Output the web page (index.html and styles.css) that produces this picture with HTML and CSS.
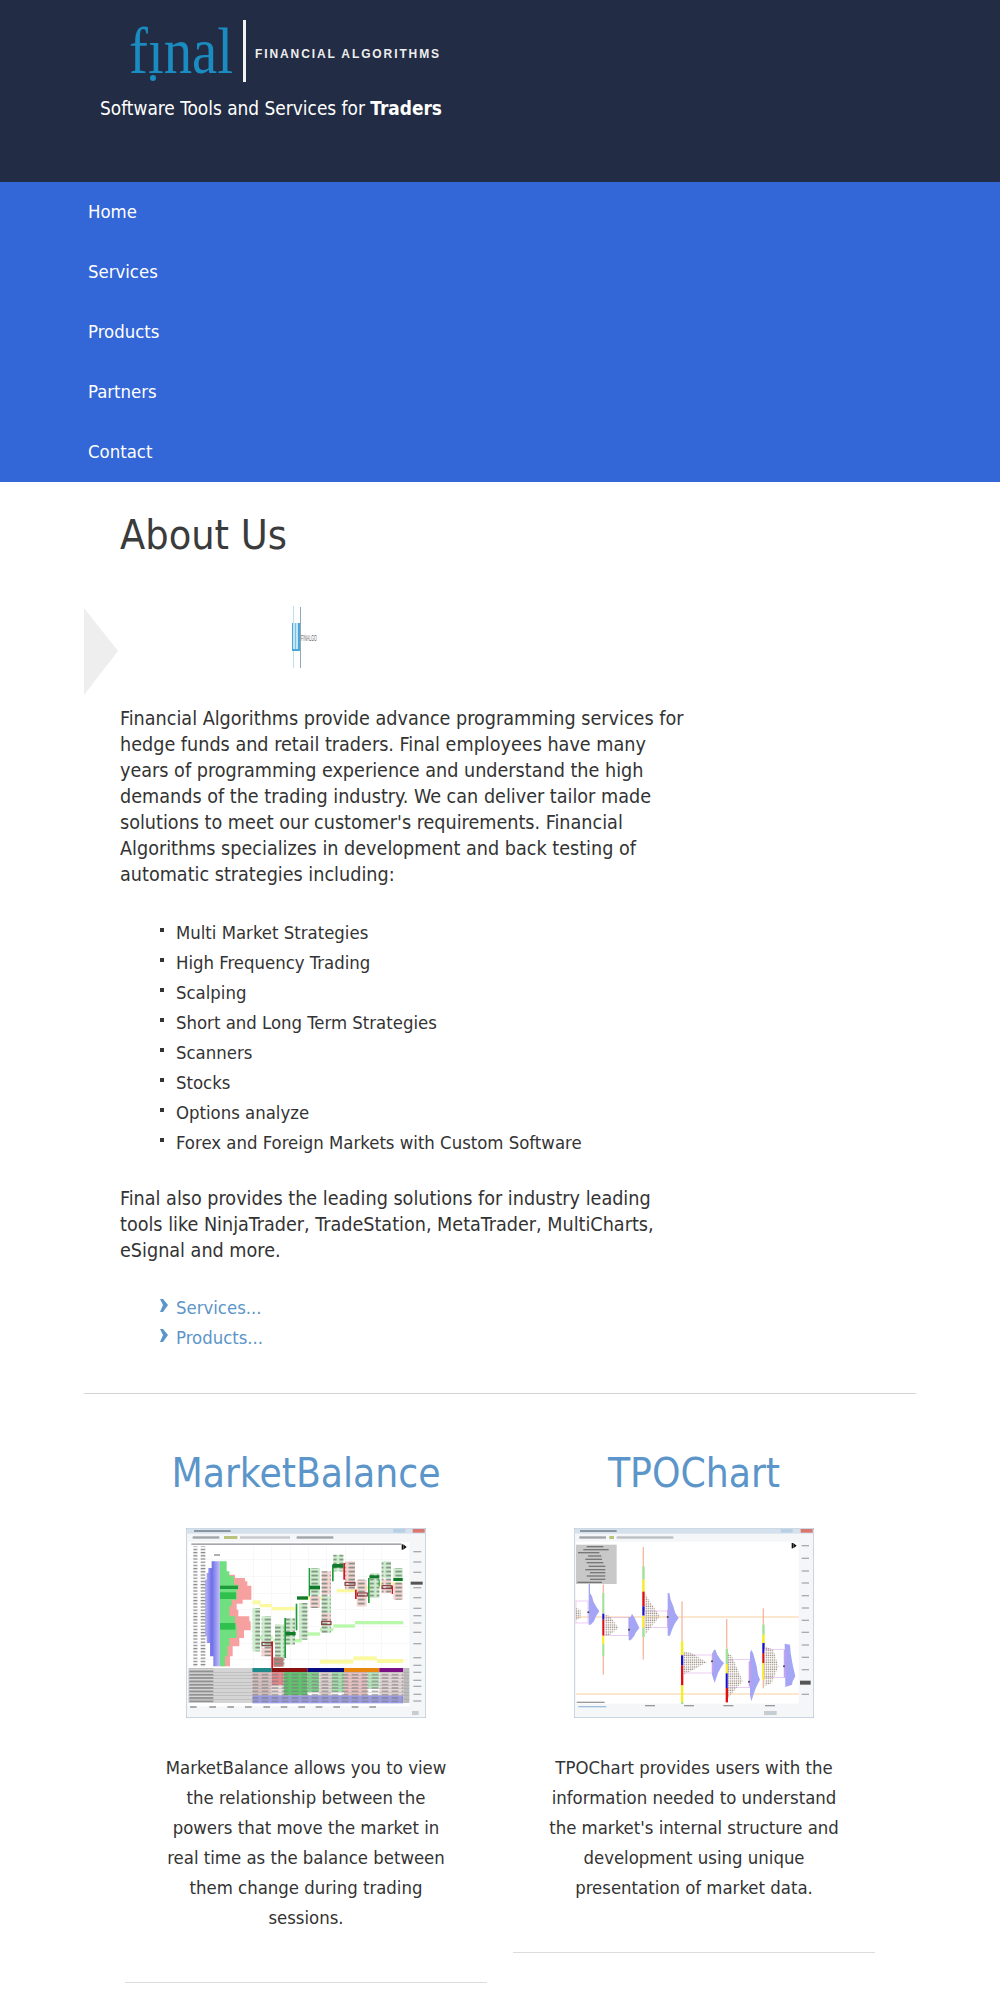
FILE: index.html
```html
<!DOCTYPE html>
<html lang="en">
<head>
  <meta charset="UTF-8">
  <title>Financial Algorithms</title>
  <link rel="stylesheet" href="styles.css">
</head>
<body>

<header class="top">
  <div class="logo">
    <span class="logo-word"><span class="logo-letters">fınal</span><span class="logo-dot"></span></span>
    <span class="logo-name">FINANCIAL ALGORITHMS</span>
  </div>
  <p class="tagline">Software Tools and Services for <strong>Traders</strong></p>
</header>

<nav class="menu">
  <a href="#">Home</a>
  <a href="#">Services</a>
  <a href="#">Products</a>
  <a href="#">Partners</a>
  <a href="#">Contact</a>
</nav>

<main class="page">
  <h1>About Us</h1>

  <div class="banner">
    <svg class="banner-arrow" width="34" height="87" viewBox="0 0 34 87"><polygon points="0,0 34,43 0,87" fill="#eeeeee"/></svg>
    <svg class="banner-logo" width="26" height="62" viewBox="0 0 26 62">
      <rect x="1" y="0" width="1" height="62" fill="#bcdff0"/>
      <rect x="8" y="1" width="1" height="61" fill="#8fa9b5"/>
      <rect x="0" y="17" width="8" height="28" fill="#c4e5f4"/>
      <rect x="0" y="17" width="1" height="28" fill="#4aa6d6"/>
      <rect x="3" y="17" width="1" height="28" fill="#7cc0e2"/>
      <rect x="6" y="17" width="2" height="28" fill="#4aa6d6"/>
      <rect x="0" y="43" width="8" height="2" fill="#4aa6d6"/>
      <text transform="translate(9 35) scale(0.4 1)" font-size="9" font-family="Liberation Sans" fill="#666">FINALGO</text>
    </svg>
  </div>

  <div class="about">
    <p>Financial Algorithms provide advance programming services for hedge funds and retail traders. Final employees have many years of programming experience and understand the high demands of the trading industry. We can deliver tailor made solutions to meet our customer's requirements. Financial Algorithms specializes in development and back testing of automatic strategies including:</p>

    <ul class="squares">
      <li>Multi Market Strategies</li>
      <li>High Frequency Trading</li>
      <li>Scalping</li>
      <li>Short and Long Term Strategies</li>
      <li>Scanners</li>
      <li>Stocks</li>
      <li>Options analyze</li>
      <li>Forex and Foreign Markets with Custom Software</li>
    </ul>

    <p>Final also provides the leading solutions for industry leading tools like NinjaTrader, TradeStation, MetaTrader, MultiCharts, eSignal and more.</p>

    <ul class="more">
      <li><svg width="8" height="14" viewBox="0 0 8 14"><path d="M0 0 L3 0 L8 6 L3 13 L0 13 L3 6 Z" fill="#5b95c9"/></svg><a href="#">Services...</a></li>
      <li><svg width="8" height="14" viewBox="0 0 8 14"><path d="M0 0 L3 0 L8 6 L3 13 L0 13 L3 6 Z" fill="#5b95c9"/></svg><a href="#">Products...</a></li>
    </ul>
  </div>

  <hr class="divider">

  <div class="products">
    <section class="product">
      <h2><a href="#">MarketBalance</a></h2>
      <svg class="shot" width="240" height="190" viewBox="48 55 720 570">
        <defs>
          <linearGradient id="blueProfile" x1="0" x2="1" y1="0" y2="0">
            <stop offset="0" stop-color="#b9b9f6"/>
            <stop offset="0.45" stop-color="#6e6eea"/>
            <stop offset="1" stop-color="#c2c2f4"/>
          </linearGradient>
          <pattern id="labelRows" width="46" height="9.6" patternUnits="userSpaceOnUse">
            <rect x="0" y="2" width="36" height="4" fill="#8a8a8a"/>
          </pattern>
          <pattern id="cellRows" width="30" height="10" patternUnits="userSpaceOnUse">
            <rect x="5" y="3" width="20" height="4" fill="#777"/>
          </pattern>
          <pattern id="numRows" width="28" height="12" patternUnits="userSpaceOnUse">
            <rect x="4" y="3" width="20" height="5" fill="#7c8c7c"/>
          </pattern>
          <pattern id="tableRows" width="60" height="10" patternUnits="userSpaceOnUse">
            <rect x="0" y="3" width="60" height="4" fill="#808080"/>
          </pattern>
          <pattern id="tpoText" width="6" height="7" patternUnits="userSpaceOnUse">
            <rect x="0" y="1" width="4" height="4" fill="#a5988c"/>
          </pattern>
        </defs>
        <rect x="48" y="55" width="720" height="570" fill="#f4f6f8" stroke="#9fb4c8" stroke-width="3"/>
        <rect x="50" y="57" width="716" height="15" fill="#d5e2ee"/>
        <rect x="670" y="58" width="36" height="11" fill="#b9cfe4"/>
        <rect x="728" y="58" width="36" height="11" fill="#d9776f"/>
        <rect x="72" y="61" width="110" height="6" fill="#8a96a2"/>
        <rect x="68" y="80" width="80" height="7" fill="#a0a4a8"/>
        <rect x="162" y="79" width="40" height="9" fill="#b8c27c"/>
        <rect x="210" y="80" width="150" height="7" fill="#c5c8cc"/>
        <rect x="380" y="80" width="110" height="7" fill="#a0a4a8"/>
        <rect x="55" y="97" width="663" height="493" fill="#ffffff"/>
        <rect x="64" y="101" width="630" height="5" fill="#a5a8ac"/>
        <rect x="695" y="104" width="4" height="16" fill="#111"/>
        <polygon points="700,104 710,112 700,120" fill="#111"/>

        <g fill="#e9e9e9">
          <rect x="250" y="110" width="1" height="365"/><rect x="305" y="110" width="1" height="365"/><rect x="360" y="110" width="1" height="365"/><rect x="415" y="110" width="1" height="365"/><rect x="470" y="110" width="1" height="365"/><rect x="525" y="110" width="1" height="365"/><rect x="580" y="110" width="1" height="365"/><rect x="635" y="110" width="1" height="365"/>
          <rect x="60" y="150" width="655" height="1"/><rect x="60" y="200" width="655" height="1"/><rect x="60" y="250" width="655" height="1"/><rect x="60" y="300" width="655" height="1"/><rect x="60" y="350" width="655" height="1"/><rect x="60" y="400" width="655" height="1"/><rect x="60" y="450" width="655" height="1"/>
        </g>

        <polygon points="125,155 150,155 150,470 130,470 130,440 120,440 120,400 110,400 110,380 105,380 105,210 110,210 110,190 115,190 115,175 125,175" fill="url(#blueProfile)"/>
        <polygon points="150,195 195,195 195,205 225,205 225,215 232,215 232,228 244,228 244,270 218,270 218,282 200,282 200,300 205,300 205,320 238,320 238,335 242,335 242,362 222,362 222,385 208,385 208,410 188,410 188,440 180,440 180,470 150,470" fill="#f6a0a0"/>
        <polygon points="150,155 170,155 170,185 178,185 178,200 192,200 192,225 205,225 205,240 200,240 200,270 185,270 185,290 178,290 178,320 195,320 195,345 200,345 200,385 178,385 178,410 172,410 172,440 165,440 165,470 150,470" fill="#6fdf80"/>
        <rect x="150" y="228" width="54" height="10" fill="#1f9c3a"/>
        <rect x="150" y="248" width="48" height="20" fill="#2fc04e"/>
        <rect x="150" y="340" width="46" height="20" fill="#2fc04e"/>
        <rect x="70" y="110" width="36" height="362" fill="url(#labelRows)"/>
        <rect x="132" y="134" width="18" height="4" fill="#888"/>

        <g fill="#fbf9a0">
          <rect x="248" y="272" width="24" height="12"/><rect x="270" y="283" width="36" height="10"/><rect x="305" y="292" width="70" height="10"/><rect x="395" y="260" width="60" height="10"/><rect x="500" y="238" width="60" height="10"/><rect x="560" y="228" width="70" height="10"/><rect x="625" y="218" width="70" height="10"/>
          <rect x="450" y="450" width="100" height="12"/><rect x="550" y="440" width="70" height="12"/><rect x="620" y="448" width="80" height="12"/>
        </g>
        <g fill="#b9f7ab">
          <rect x="248" y="378" width="60" height="10"/><rect x="310" y="388" width="85" height="10"/><rect x="395" y="368" width="55" height="10"/><rect x="450" y="355" width="40" height="10"/><rect x="490" y="344" width="65" height="10"/><rect x="555" y="334" width="145" height="10"/>
        </g>

        <g fill="#cfeecf">
          <rect x="248" y="295" width="22" height="130"/><rect x="275" y="320" width="28" height="90"/><rect x="315" y="345" width="28" height="125"/><rect x="345" y="325" width="30" height="80"/><rect x="388" y="280" width="24" height="110"/><rect x="420" y="175" width="30" height="80"/><rect x="455" y="260" width="28" height="110"/><rect x="490" y="135" width="30" height="50"/><rect x="600" y="190" width="28" height="75"/><rect x="635" y="155" width="28" height="50"/><rect x="670" y="175" width="28" height="40"/>
        </g>
        <g fill="#f8d5d5">
          <rect x="420" y="260" width="30" height="35"/><rect x="455" y="185" width="28" height="70"/><rect x="525" y="155" width="30" height="85"/><rect x="560" y="210" width="30" height="80"/><rect x="635" y="210" width="28" height="40"/><rect x="670" y="220" width="28" height="50"/><rect x="275" y="415" width="28" height="25"/><rect x="455" y="310" width="28" height="30"/>
        </g>
        <g fill="url(#numRows)">
          <rect x="248" y="295" width="22" height="130"/><rect x="275" y="320" width="28" height="120"/><rect x="315" y="345" width="28" height="125"/><rect x="345" y="325" width="30" height="80"/><rect x="388" y="280" width="24" height="110"/><rect x="420" y="175" width="30" height="120"/><rect x="455" y="185" width="28" height="185"/><rect x="490" y="135" width="30" height="50"/><rect x="525" y="155" width="30" height="85"/><rect x="560" y="210" width="30" height="80"/><rect x="600" y="190" width="28" height="75"/><rect x="635" y="155" width="28" height="95"/><rect x="670" y="175" width="28" height="95"/>
        </g>
        <g fill="#1f9c3a">
          <rect x="343" y="325" width="5" height="120"/><rect x="377" y="282" width="5" height="80"/><rect x="416" y="175" width="4" height="85"/><rect x="486" y="165" width="5" height="50"/><rect x="594" y="205" width="5" height="75"/><rect x="626" y="210" width="3" height="20"/>
        </g>
        <g fill="#d8141c">
          <rect x="304" y="395" width="5" height="80"/><rect x="520" y="160" width="5" height="50"/><rect x="555" y="240" width="5" height="28"/><rect x="665" y="228" width="4" height="25"/>
        </g>
        <g fill="#0f7a2b">
          <rect x="381" y="260" width="33" height="10"/><rect x="347" y="367" width="30" height="10"/><rect x="418" y="228" width="32" height="11"/><rect x="488" y="163" width="32" height="11"/><rect x="598" y="197" width="30" height="9"/><rect x="670" y="205" width="28" height="9"/>
        </g>
        <g fill="none" stroke="#7b2a32" stroke-width="3">
          <rect x="276" y="398" width="28" height="10"/><rect x="455" y="335" width="28" height="10"/><rect x="525" y="218" width="30" height="9"/><rect x="562" y="250" width="30" height="9"/><rect x="636" y="228" width="28" height="9"/>
        </g>
        <rect x="310" y="443" width="30" height="28" fill="#c27a7a"/>
        <rect x="310" y="443" width="30" height="28" fill="url(#numRows)"/>

        <g fill="#a8acb0">
          <rect x="730" y="124" width="24" height="4"/><rect x="730" y="155" width="24" height="4"/><rect x="730" y="186" width="24" height="4"/><rect x="730" y="232" width="24" height="4"/><rect x="730" y="262" width="24" height="4"/><rect x="730" y="294" width="24" height="4"/><rect x="730" y="316" width="24" height="4"/><rect x="730" y="338" width="24" height="4"/><rect x="730" y="366" width="24" height="4"/><rect x="730" y="400" width="24" height="4"/><rect x="730" y="442" width="24" height="4"/><rect x="730" y="465" width="24" height="4"/><rect x="730" y="486" width="24" height="4"/><rect x="730" y="510" width="24" height="4"/><rect x="730" y="528" width="24" height="4"/><rect x="730" y="552" width="24" height="4"/><rect x="730" y="572" width="24" height="4"/>
        </g>
        <rect x="722" y="216" width="36" height="9" fill="#555"/>

        <rect x="55" y="475" width="192" height="105" fill="#d4d4d4"/>
        <rect x="58" y="477" width="72" height="103" fill="url(#tableRows)"/>
        <rect x="247" y="475" width="58" height="12" fill="#1f8a8a"/>
        <rect x="305" y="475" width="107" height="12" fill="#8a1010"/>
        <rect x="412" y="475" width="110" height="12" fill="#0a0a80"/>
        <rect x="522" y="475" width="106" height="12" fill="#e8860f"/>
        <rect x="628" y="475" width="72" height="12" fill="#7a0f86"/>
        <rect x="247" y="487" width="58" height="70" fill="#d6bfbf"/>
        <rect x="305" y="487" width="36" height="40" fill="#e8868a"/>
        <rect x="305" y="527" width="36" height="30" fill="#efe0e0"/>
        <rect x="341" y="487" width="71" height="70" fill="#5cc46a"/>
        <rect x="412" y="487" width="36" height="60" fill="#7ed18a"/>
        <rect x="448" y="487" width="36" height="70" fill="#e0d0d0"/>
        <rect x="484" y="487" width="38" height="60" fill="#a5e0ad"/>
        <rect x="522" y="487" width="70" height="70" fill="#e8c2c2"/>
        <rect x="592" y="487" width="36" height="50" fill="#b8e6be"/>
        <rect x="628" y="487" width="72" height="70" fill="#e4d6d6"/>
        <rect x="247" y="557" width="453" height="24" fill="#9c9ce4"/>
        <rect x="247" y="487" width="453" height="94" fill="url(#cellRows)" opacity="0.7"/>
        <rect x="700" y="475" width="18" height="105" fill="#bbb"/>
        <g fill="#999">
          <rect x="55" y="487" width="663" height="1"/><rect x="55" y="497" width="663" height="1"/><rect x="55" y="507" width="663" height="1"/><rect x="55" y="517" width="663" height="1"/><rect x="55" y="527" width="663" height="1"/><rect x="55" y="537" width="663" height="1"/><rect x="55" y="547" width="663" height="1"/><rect x="55" y="557" width="663" height="1"/><rect x="55" y="569" width="663" height="1"/>
        </g>
        <g fill="#888">
          <rect x="60" y="590" width="20" height="4"/><rect x="118" y="590" width="20" height="4"/><rect x="172" y="590" width="20" height="4"/><rect x="225" y="590" width="20" height="4"/><rect x="280" y="590" width="20" height="4"/><rect x="332" y="590" width="20" height="4"/><rect x="385" y="590" width="20" height="4"/><rect x="437" y="590" width="20" height="4"/><rect x="490" y="590" width="20" height="4"/><rect x="545" y="590" width="20" height="4"/><rect x="598" y="590" width="20" height="4"/>
        </g>
        <rect x="726" y="604" width="20" height="12" fill="#c5ccd2"/>
      </svg>
      <p>MarketBalance allows you to view the relationship between the powers that move the market in real time as the balance between them change during trading sessions.</p>
      <hr class="product-rule">
    </section>

    <section class="product">
      <h2><a href="#">TPOChart</a></h2>
      <svg class="shot" width="240" height="190" viewBox="42 55 720 570">
        <rect x="42" y="55" width="720" height="570" fill="#f4f6f8" stroke="#9fb4c8" stroke-width="3"/>
        <rect x="44" y="57" width="716" height="15" fill="#d5e2ee"/>
        <rect x="662" y="58" width="36" height="11" fill="#b9cfe4"/>
        <rect x="722" y="58" width="36" height="11" fill="#d9776f"/>
        <rect x="60" y="61" width="110" height="6" fill="#8a96a2"/>
        <rect x="58" y="80" width="80" height="7" fill="#a0a4a8"/>
        <rect x="148" y="79" width="14" height="9" fill="#b8c27c"/>
        <rect x="170" y="80" width="170" height="7" fill="#bcc0c4"/>
        <rect x="48" y="96" width="668" height="486" fill="#ffffff"/>
        <rect x="48" y="105" width="122" height="118" fill="#c8c8c8"/>
        <g fill="#777">
          <rect x="80" y="109" width="50" height="4"/><rect x="70" y="118" width="76" height="4"/><rect x="54" y="127" width="64" height="4"/><rect x="84" y="137" width="40" height="4"/><rect x="76" y="147" width="50" height="4"/><rect x="80" y="157" width="50" height="4"/><rect x="86" y="168" width="50" height="4"/><rect x="76" y="178" width="60" height="4"/><rect x="90" y="187" width="46" height="4"/><rect x="80" y="197" width="56" height="4"/><rect x="90" y="207" width="46" height="4"/><rect x="52" y="216" width="74" height="4"/>
        </g>
        <rect x="695" y="100" width="4" height="16" fill="#111"/>
        <polygon points="700,100 710,108 700,116" fill="#111"/>

        <rect x="48" y="321" width="668" height="2" fill="#f2b76a"/>
        <rect x="48" y="552" width="668" height="2" fill="#f2b76a"/>

        <rect x="128" y="225" width="4" height="270" fill="#f6b8a0"/>
        <rect x="127" y="250" width="6" height="60" fill="#9fe39a"/>
        <rect x="127" y="312" width="6" height="18" fill="#1414c8"/>
        <rect x="127" y="330" width="6" height="48" fill="#e01010"/>
        <rect x="127" y="378" width="6" height="26" fill="#f5ef20"/>
        <rect x="127" y="404" width="6" height="36" fill="#9fe39a"/>

        <rect x="248" y="112" width="4" height="338" fill="#f6b8a0"/>
        <rect x="247" y="170" width="7" height="40" fill="#9fe39a"/>
        <rect x="247" y="210" width="7" height="36" fill="#f5ef20"/>
        <rect x="247" y="246" width="7" height="44" fill="#e01010"/>
        <rect x="247" y="290" width="7" height="28" fill="#1414c8"/>
        <rect x="247" y="318" width="7" height="36" fill="#f5ef20"/>
        <rect x="247" y="354" width="7" height="28" fill="#9fe39a"/>

        <rect x="364" y="275" width="4" height="305" fill="#f6b8a0"/>
        <rect x="363" y="395" width="7" height="42" fill="#f5ef20"/>
        <rect x="363" y="437" width="7" height="30" fill="#1414c8"/>
        <rect x="363" y="467" width="7" height="60" fill="#e01010"/>
        <rect x="363" y="527" width="7" height="50" fill="#f5ef20"/>
        <rect x="363" y="577" width="7" height="6" fill="#9fe39a"/>

        <rect x="498" y="328" width="4" height="250" fill="#f6b8a0"/>
        <rect x="497" y="418" width="7" height="45" fill="#9fe39a"/>
        <rect x="497" y="463" width="7" height="28" fill="#f5ef20"/>
        <rect x="497" y="491" width="7" height="44" fill="#1414c8"/>
        <rect x="497" y="535" width="7" height="43" fill="#e01010"/>

        <rect x="608" y="296" width="4" height="240" fill="#f6b8a0"/>
        <rect x="607" y="345" width="7" height="30" fill="#9fe39a"/>
        <rect x="607" y="375" width="7" height="25" fill="#f5ef20"/>
        <rect x="607" y="400" width="7" height="30" fill="#1414c8"/>
        <rect x="607" y="430" width="7" height="30" fill="#e01010"/>
        <rect x="607" y="460" width="7" height="50" fill="#f5ef20"/>

        <g fill="none" stroke="#e3b5ee" stroke-width="2">
          <rect x="48" y="274" width="36" height="66"/><rect x="134" y="324" width="72" height="54"/><rect x="255" y="304" width="68" height="50"/><rect x="370" y="436" width="86" height="54"/><rect x="504" y="450" width="66" height="84"/><rect x="614" y="420" width="58" height="84"/>
        </g>
        <g fill="#a5a5f5">
          <polygon points="86,222 90,222 90,250 96,260 100,275 108,290 118,305 108,320 102,335 92,345 86,345"/>
          <polygon points="206,322 212,322 216,312 224,325 238,355 228,368 222,380 212,392 206,392"/>
          <polygon points="323,250 328,250 332,270 340,290 346,310 356,325 344,342 336,360 330,378 323,378"/>
          <polygon points="456,432 462,420 466,420 472,435 482,450 492,460 482,475 474,490 464,520 456,495"/>
          <polygon points="570,430 574,420 580,432 590,470 594,495 600,510 590,530 584,545 574,575 570,555"/>
          <polygon points="674,402 690,405 692,430 698,465 706,500 698,515 696,525 676,532"/>
        </g>
        <g fill="#c9a0ee">
          <rect x="322" y="300" width="4" height="50"/><rect x="456" y="432" width="4" height="56"/><rect x="566" y="455" width="6" height="75"/><rect x="672" y="420" width="4" height="84"/>
        </g>
        <g fill="url(#tpoText)">
          <polygon points="134,314 150,320 176,355 150,375 134,380"/>
          <polygon points="255,250 266,270 300,320 275,350 255,375"/>
          <polygon points="370,425 395,430 440,458 400,480 370,495"/>
          <polygon points="504,430 516,440 548,515 525,540 504,565"/>
          <polygon points="614,410 640,420 655,470 635,520 614,530"/>
          <polygon points="48,295 62,300 62,325 48,330"/>
        </g>
        <g fill="#444">
          <circle cx="85" cy="308" r="3"/><circle cx="207" cy="360" r="3"/><circle cx="323" cy="322" r="3"/><circle cx="456" cy="455" r="3"/><circle cx="567" cy="516" r="3"/><circle cx="672" cy="470" r="3"/>
        </g>

        <g fill="#a8acb0">
          <rect x="725" y="106" width="22" height="4"/><rect x="725" y="144" width="22" height="4"/><rect x="725" y="182" width="22" height="4"/><rect x="725" y="218" width="22" height="4"/><rect x="725" y="256" width="22" height="4"/><rect x="725" y="293" width="22" height="4"/><rect x="725" y="330" width="22" height="4"/><rect x="725" y="366" width="22" height="4"/><rect x="725" y="404" width="22" height="4"/><rect x="725" y="441" width="22" height="4"/><rect x="725" y="478" width="22" height="4"/><rect x="725" y="552" width="22" height="4"/>
        </g>
        <rect x="720" y="513" width="32" height="12" fill="#555"/>
        <g fill="#999">
          <rect x="50" y="576" width="84" height="4"/><rect x="255" y="586" width="30" height="4"/><rect x="372" y="586" width="30" height="4"/><rect x="490" y="586" width="30" height="4"/><rect x="615" y="586" width="30" height="4"/>
        </g>
        <rect x="55" y="589" width="84" height="4" fill="#9fc0dd"/>
        <rect x="612" y="604" width="38" height="12" fill="#c5ccd2"/>
      </svg>
      <p>TPOChart provides users with the information needed to understand the market's internal structure and development using unique presentation of market data.</p>
      <hr class="product-rule">
    </section>
  </div>
</main>

</body>
</html>
```

FILE: styles.css
```css
body {
  margin: 0;
  font-family: "DejaVu Sans Condensed", "DejaVu Sans", sans-serif;
  font-size: 18.4px;
  line-height: 26px;
  color: #333;
  background: #fff;
}
.top {
  height: 182px;
  box-sizing: border-box;
  padding: 20px 0 0 100px;
  background: #222c44;
  color: #fff;
}
.logo {
  display: flex;
  align-items: center;
  height: 62px;
  margin-left: 29px;
}
.logo-word {
  position: relative;
  width: 113px;
  margin-right: 1px;
  font-family: "Liberation Serif", serif;
  font-size: 66px;
  line-height: 62px;
  color: #1b8cc2;
}
.logo-letters {
  display: inline-block;
  transform: scaleX(0.86);
  transform-origin: left;
}
.logo-dot {
  position: absolute;
  left: 21px;
  top: 55px;
  width: 6px;
  height: 6px;
  border-radius: 50%;
  background: #1b8cc2;
}
.logo-name {
  height: 62px;
  padding-left: 9px;
  border-left: 3px solid #f2f2f2;
  font-family: "Liberation Sans", sans-serif;
  font-size: 12px;
  font-weight: bold;
  line-height: 68px;
  letter-spacing: 1.9px;
  color: #eee;
}
.tagline {
  margin: 13px 0 0;
  font-size: 18.9px;
}
.menu {
  display: flex;
  flex-direction: column;
  background: #3366d6;
}
.menu a {
  height: 60px;
  padding-left: 88px;
  line-height: 60px;
  color: #fff;
  text-decoration: none;
}
.page {
  width: 832px;
  margin: 0 auto;
}
h1 {
  margin: 0;
  padding: 28px 0 0 36px;
  font-size: 41px;
  font-weight: normal;
  line-height: 50px;
  color: #3b3b3b;
}
.banner {
  display: flex;
  align-items: flex-start;
  margin-top: 48px;
  height: 87px;
}
.banner-logo {
  margin: -2px 0 0 174px;
}
.about {
  padding: 11px 0 0 36px;
  width: 572px;
}
.about p {
  margin: 0;
  font-size: 19.6px;
}
.squares, .more {
  margin: 0;
  padding: 0 0 0 40px;
  list-style: none;
}
.squares {
  margin: 30px 0 28px;
}
.squares li {
  display: flex;
  line-height: 30px;
}
.squares li::before {
  content: "";
  flex: none;
  width: 4px;
  height: 4px;
  margin: 10px 12px 0 0;
  background: #333;
}
.more {
  margin-top: 29px;
}
.more li {
  display: flex;
  line-height: 30px;
}
.more svg {
  flex: none;
  margin: 6px 8px 0 0;
}
a {
  color: #5b95c9;
  text-decoration: none;
}
.divider {
  margin: 40px 0 0;
  border: 0;
  border-top: 1px solid #d4d4d4;
}
.products {
  display: grid;
  grid-template-columns: 1fr 1fr;
  gap: 26px;
  align-items: start;
  padding: 0 41px;
}
.product {
  text-align: center;
}
.product h2 {
  margin: 0;
  padding-top: 55px;
  font-size: 40.3px;
  font-weight: normal;
  line-height: 50px;
}
.shot {
  display: block;
  margin: 29px auto 0;
  filter: blur(0.35px);
}
.product p {
  margin: 35px 33px 0;
  line-height: 30px;
}
.product-rule {
  margin: 49px 0 0;
  border: 0;
  border-top: 1px solid #dcdcdc;
}
```
